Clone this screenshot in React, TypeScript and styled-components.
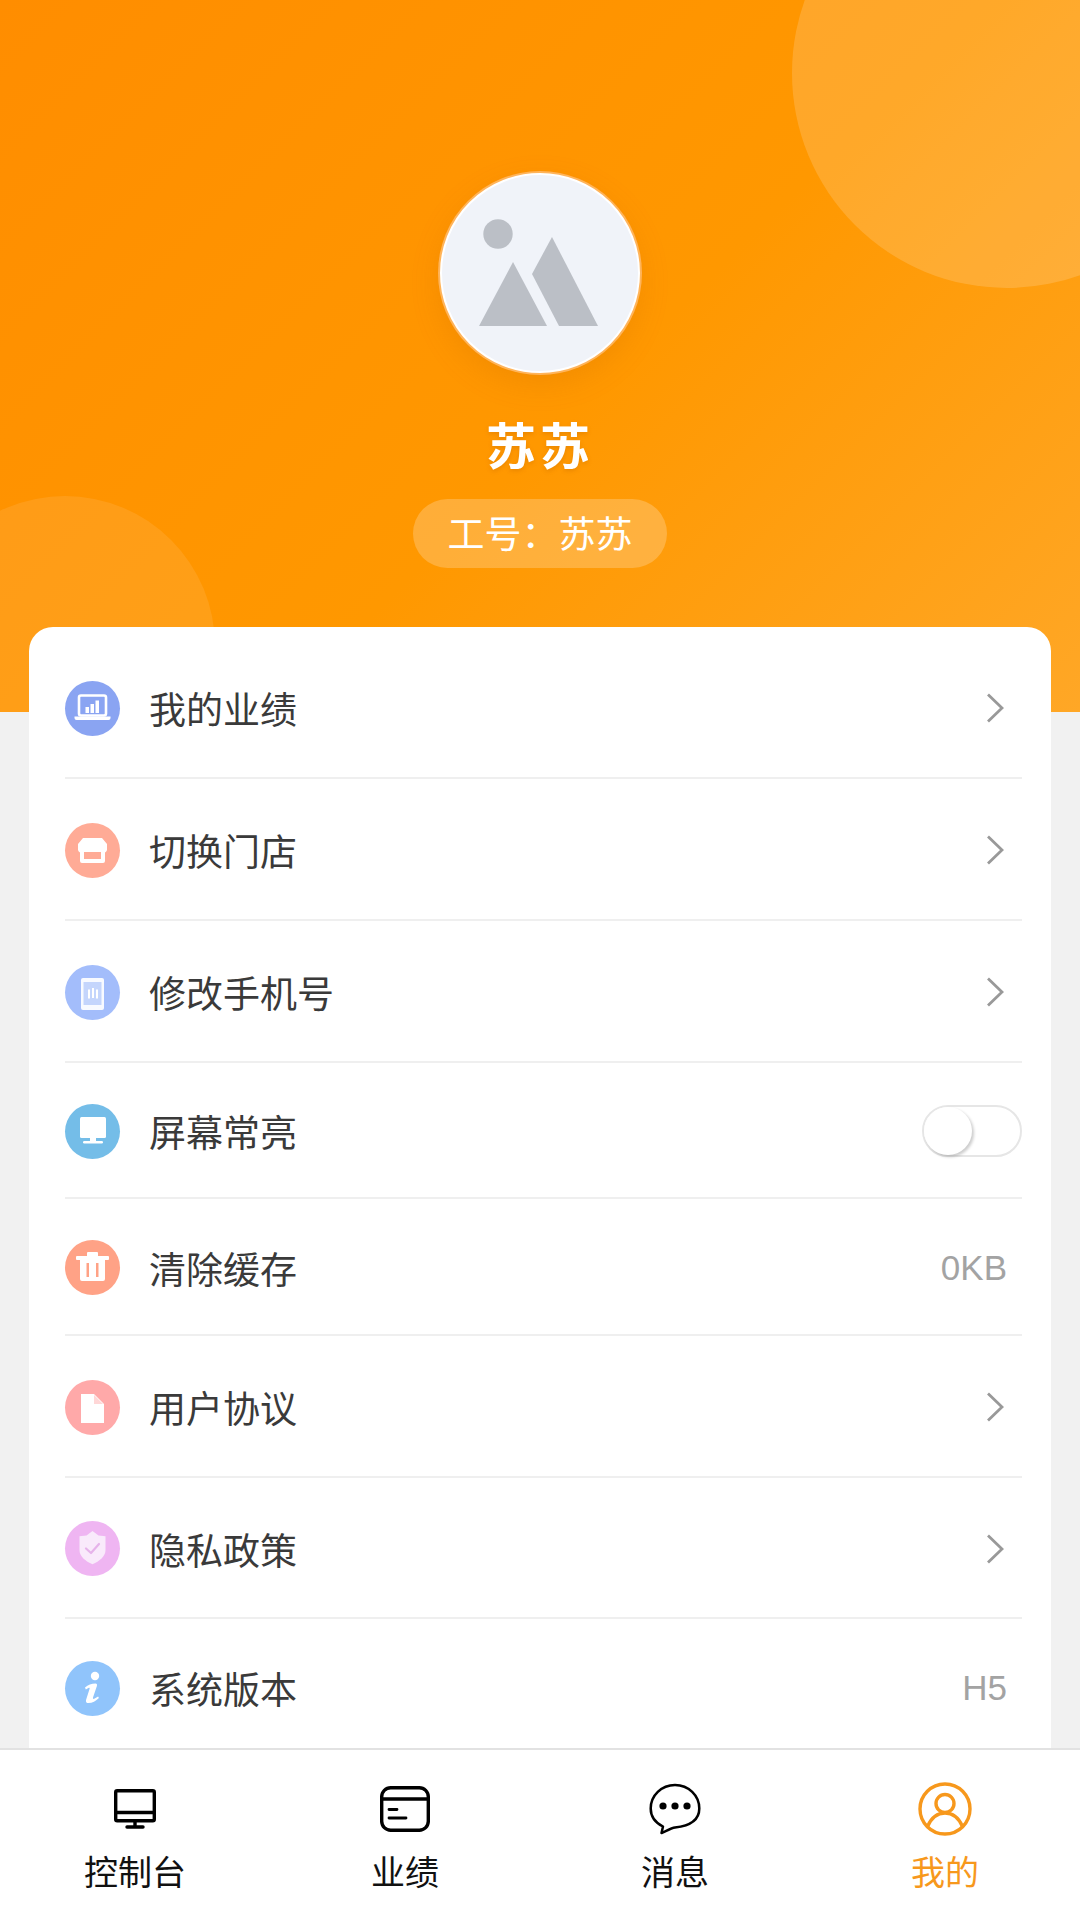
import React from 'react';
import styled, { createGlobalStyle } from 'styled-components';

const GlobalStyle = createGlobalStyle`
  html, body {
    margin: 0;
    padding: 0;
    background: #f1f1f1;
    font-family: "Noto Sans CJK SC", "Liberation Sans", sans-serif;
  }
`;

const MonitorGlyph = () => (
  <svg width="55" height="55" viewBox="0 0 55 55" fill="#fff">
    <rect x="15" y="13" width="26" height="21" rx="1.500" />
    <rect x="25" y="34" width="6" height="4" />
    <rect x="18" y="37" width="20" height="2.500" rx="1.200" />
  </svg>
);

const LaptopGlyph = () => (
  <svg width="55" height="55" viewBox="0 0 55 55">
    <rect x="14" y="14.500" width="27" height="20" rx="2" fill="none" stroke="#fff" strokeWidth="2.600" />
    <path d="M9.500 35.500h36v1.500a2 2 0 0 1-2 2h-32a2 2 0 0 1-2-2z" fill="#fff" />
    <path d="M20.500 32v-6h3.500v6zM25.500 32v-9H29v9zM30.500 32V19.500H34V32z" fill="#fff" />
  </svg>
);

const StoreGlyph = () => (
  <svg width="55" height="55" viewBox="0 0 55 55">
    <path d="M18 15h19l5 6v6a4 4 0 0 1-2 2.500V38a2 2 0 0 1-2 2H17a2 2 0 0 1-2-2V29.500A4 4 0 0 1 13 27v-6z" fill="#fff" />
    <rect x="19" y="29" width="17" height="7" fill="#ffab96" />
  </svg>
);

const PhoneGlyph = () => (
  <svg width="55" height="55" viewBox="0 0 55 55">
    <rect x="16" y="13" width="23" height="32" rx="2" fill="#fff" opacity="0.920" />
    <rect x="18.500" y="17" width="18" height="23" fill="#c4d5fc" />
    <path d="M23 24.500h2v9h-2zM27 23h2v10h-2zM31 24.500h2v9h-2z" fill="#fff" />
  </svg>
);

const TrashGlyph = () => (
  <svg width="55" height="55" viewBox="0 0 55 55" fill="#fff">
    <rect x="11" y="16" width="33" height="4" rx="1" />
    <rect x="22" y="12" width="11" height="5" rx="1" />
    <path d="M15 20h25v19a2 2 0 0 1-2 2H17a2 2 0 0 1-2-2zM21.500 23v14h2.500V23zM31 23v14h2.500V23z" fillRule="evenodd" />
  </svg>
);

const DocGlyph = () => (
  <svg width="55" height="55" viewBox="0 0 55 55">
    <path d="M16 14h13l10 10v19H16z" fill="#fff" />
    <path d="M29 15l9 9h-9z" fill="#ffd7d7" />
  </svg>
);

const ShieldGlyph = () => (
  <svg width="55" height="55" viewBox="0 0 55 55">
    <path d="M27.500 10l6 4.500 7 .8v14c0 6-6 11-13 14-7-3-13-8-13-14v-14l7-.8z" fill="#f9eafb" />
    <path d="M21 27.500l5 4.500 8-9" fill="none" stroke="#e6b3ea" strokeWidth="2.200" strokeLinecap="round" strokeLinejoin="round" />
  </svg>
);

const InfoGlyph = () => (
  <svg width="55" height="55" viewBox="0 0 55 55" fill="#fff">
    <circle cx="30" cy="15" r="4.200" />
    <path d="M20 26.500c3-2.600 6.500-4 10.500-4 1.400 0 1.800 1 1.400 2.400L28 36.500c-.4 1.400.6 1.700 1.700 1.100l3.400-2 .8 1.500c-3 3-6.600 5-10.400 5-2.200 0-3-1.400-2.400-3.400l3.500-11c.3-1-.4-1.300-1.200-.8l-2.600 1.500z" />
  </svg>
);

const Chevron = () => (
  <ChevronIcon width="18" height="30" viewBox="0 0 18 30">
    <path d="M2 1.500 16 15 2 28.500" fill="none" stroke="#999" strokeWidth="2.800" />
  </ChevronIcon>
);

const DeskIcon = () => (
  <svg width="42" height="40" viewBox="0 0 42 40" fill="none" stroke="#000" strokeWidth="3.400" strokeLinejoin="round">
    <rect x="1.700" y="1.700" width="38.600" height="30" rx="1.500" />
    <path d="M2 23.500h38M21 32v5" />
    <path d="M13 38h16" strokeLinecap="round" />
  </svg>
);

const CardIcon = () => (
  <svg width="50" height="46" viewBox="0 0 50 46" fill="none" stroke="#000" strokeWidth="3.400" strokeLinecap="round">
    <rect x="1.700" y="1.700" width="46.600" height="42.600" rx="9" />
    <path d="M2 13h46" />
    <path d="M9 23.500h8M9 32h17" strokeWidth="2.800" />
  </svg>
);

const ChatIcon = () => (
  <svg width="52" height="52" viewBox="0 0 52 52">
    <path
      d="M14 43.500C6.500 39.800 1.700 33.500 1.700 25.500 1.700 12.500 12.500 2 26 2s24.300 10.500 24.300 23.500S39.500 43 26 44.500c-3 .3-8 3-13.500 5.500z"
      fill="none"
      stroke="#000"
      strokeWidth="2.500"
      strokeLinejoin="round"
    />
    <circle cx="14" cy="23" r="3.600" />
    <circle cx="26" cy="23" r="3.600" />
    <circle cx="38" cy="23" r="3.600" />
  </svg>
);

const UserIcon = () => (
  <svg width="54" height="54" viewBox="0 0 54 54" fill="none" stroke="#f7981c" strokeWidth="3.400">
    <circle cx="27" cy="27" r="25" />
    <circle cx="27" cy="21.500" r="9" />
    <path d="M9.500 44.500C13 36.500 19 31 27 31s14 5.500 17.500 13.500" />
  </svg>
);

type MenuRow = {
  label: string;
  color: string;
  height: number;
  glyph: React.ReactNode;
  right: 'arrow' | 'switch' | string;
};

const rows: MenuRow[] = [
  { label: '我的业绩', color: '#8aa4f2', height: 142, glyph: <LaptopGlyph />, right: 'arrow' },
  { label: '切换门店', color: '#ffab96', height: 142, glyph: <StoreGlyph />, right: 'arrow' },
  { label: '修改手机号', color: '#a3bdfb', height: 142, glyph: <PhoneGlyph />, right: 'arrow' },
  { label: '屏幕常亮', color: '#74bde8', height: 136, glyph: <MonitorGlyph />, right: 'switch' },
  { label: '清除缓存', color: '#ffa286', height: 137, glyph: <TrashGlyph />, right: '0KB' },
  { label: '用户协议', color: '#ffa9a9', height: 142, glyph: <DocGlyph />, right: 'arrow' },
  { label: '隐私政策', color: '#efb5f2', height: 141, glyph: <ShieldGlyph />, right: 'arrow' },
  { label: '系统版本', color: '#90c4fb', height: 136, glyph: <InfoGlyph />, right: 'H5' },
];

const tabs = [
  { label: '控制台', icon: <DeskIcon /> },
  { label: '业绩', icon: <CardIcon /> },
  { label: '消息', icon: <ChatIcon /> },
  { label: '我的', icon: <UserIcon />, active: true },
];

export default function App() {
  return (
    <Page>
      <GlobalStyle />
      <Main>
        <Header>
          <BigCircle />
          <SmallCircle />
          <Avatar>
            <svg width="196" height="196" viewBox="0 0 196 196" fill="#bbbfc6">
              <circle cx="56" cy="59" r="14.700" />
              <path d="M71 87l34 64H37z" />
              <path d="M110 62l46 89h-39L90 99z" />
            </svg>
          </Avatar>
          <Name>苏苏</Name>
          <IdPill>工号：苏苏</IdPill>
        </Header>
        <Card>
          {rows.map((row, i) => (
            <Row key={row.label} $height={row.height} $last={i === rows.length - 1}>
              <Badge $color={row.color}>{row.glyph}</Badge>
              <RowLabel>{row.label}</RowLabel>
              {row.right === 'arrow' && <Chevron />}
              {row.right === 'switch' && (
                <Switch>
                  <Knob />
                </Switch>
              )}
              {row.right !== 'arrow' && row.right !== 'switch' && <RowValue>{row.right}</RowValue>}
            </Row>
          ))}
        </Card>
      </Main>
      <TabBar>
        {tabs.map((tab) => (
          <Tab key={tab.label}>
            <TabIcon>{tab.icon}</TabIcon>
            <TabLabel $active={!!tab.active}>{tab.label}</TabLabel>
          </Tab>
        ))}
      </TabBar>
    </Page>
  );
}

const Page = styled.div`
  width: 1080px;
  height: 1920px;
  display: flex;
  flex-direction: column;
  overflow: hidden;
  background: #f1f1f1;
`;

const Main = styled.div`
  flex: 1;
  min-height: 0;
  overflow: hidden;
`;

const Header = styled.div`
  position: relative;
  height: 712px;
  padding-top: 173px;
  box-sizing: border-box;
  display: flex;
  flex-direction: column;
  align-items: center;
  overflow: hidden;
  background: linear-gradient(135deg, #ff8d00 0%, #ff9800 55%, #ffa726 100%);
`;

const BigCircle = styled.div`
  position: absolute;
  left: 792px;
  top: -142px;
  width: 430px;
  height: 430px;
  border-radius: 50%;
  background: rgba(255, 255, 255, 0.16);
`;

const SmallCircle = styled.div`
  position: absolute;
  left: -85px;
  top: 496px;
  width: 300px;
  height: 300px;
  border-radius: 50%;
  background: rgba(255, 255, 255, 0.09);
`;

const Avatar = styled.div`
  position: relative;
  width: 200px;
  height: 200px;
  box-sizing: border-box;
  border: 2px solid #fff;
  border-radius: 50%;
  background: #f0f3f9;
  overflow: hidden;
  box-shadow: 0 0 0 2px #ffb45a, 0 10px 30px rgba(190, 100, 0, 0.2);
`;

const Name = styled.div`
  position: relative;
  margin-top: 36px;
  font-size: 50px;
  line-height: 68px;
  font-weight: 700;
  letter-spacing: 4px;
  color: #fff;
  text-shadow: 0 2px 4px rgba(190, 100, 0, 0.3);
`;

const IdPill = styled.div`
  position: relative;
  margin-top: 22px;
  width: 254px;
  height: 69px;
  padding-bottom: 4px;
  box-sizing: border-box;
  border-radius: 35px;
  display: flex;
  align-items: center;
  justify-content: center;
  background: rgba(255, 255, 255, 0.22);
  color: #fff;
  font-size: 37px;
  white-space: nowrap;
`;

const Card = styled.div`
  position: relative;
  margin: -85px 29px 0;
  padding: 10px 29px 0 36px;
  background: #fff;
  border-radius: 24px 24px 0 0;
`;

const Row = styled.div<{ $height: number; $last: boolean }>`
  height: ${(p) => p.$height}px;
  box-sizing: border-box;
  padding-top: 2px;
  display: flex;
  align-items: center;
  border-bottom: ${(p) => (p.$last ? 'none' : '2px solid #efefef')};
`;

const Badge = styled.div<{ $color: string }>`
  flex: none;
  width: 55px;
  height: 55px;
  border-radius: 50%;
  background: ${(p) => p.$color};
  svg {
    display: block;
  }
`;

const RowLabel = styled.div`
  flex: 1;
  margin-left: 29px;
  font-size: 37px;
  color: #3a3a3a;
`;

const ChevronIcon = styled.svg`
  margin-right: 18px;
`;

const RowValue = styled.div`
  margin-right: 15px;
  font-family: "Liberation Sans", sans-serif;
  font-size: 35px;
  color: #a3a3a3;
`;

const Switch = styled.div`
  width: 100px;
  height: 52px;
  box-sizing: border-box;
  border: 2px solid #e6e6e6;
  border-radius: 26px;
  background: #fff;
`;

const Knob = styled.div`
  width: 48px;
  height: 48px;
  border-radius: 50%;
  background: #fff;
  box-shadow: 2px 2px 3px rgba(0, 0, 0, 0.2);
`;

const TabBar = styled.div`
  flex: none;
  height: 172px;
  box-sizing: border-box;
  display: flex;
  background: #fff;
  border-top: 2px solid #e2e2e2;
`;

const Tab = styled.div`
  flex: 1;
  display: flex;
  flex-direction: column;
  align-items: center;
  padding-top: 32px;
`;

const TabIcon = styled.div`
  height: 54px;
  display: flex;
  align-items: center;
  justify-content: center;
`;

const TabLabel = styled.div<{ $active: boolean }>`
  margin-top: 12px;
  font-size: 34px;
  line-height: 46px;
  color: ${(p) => (p.$active ? '#f7981c' : '#111')};
`;
